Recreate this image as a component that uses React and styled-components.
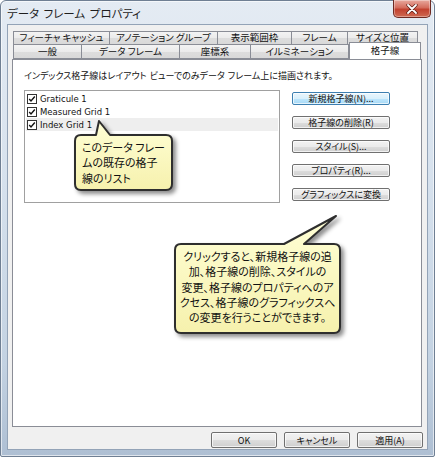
import React from 'react'
import styled, { createGlobalStyle } from 'styled-components'

const GlobalStyle = createGlobalStyle`
  html, body { margin: 0; padding: 0; background: #ffffff; }
  body {
    font-family: "Noto Sans CJK JP", "Liberation Sans", sans-serif;
    font-feature-settings: "palt";
  }
`

const Window = styled.div`
  position: relative;
  box-sizing: border-box;
  width: 435px;
  height: 457px;
  padding: 0 6px 6px 6px;
  border: 1px solid #6f7f93;
  border-radius: 6px 6px 2px 2px;
  background: linear-gradient(180deg, #e4ebf3 0%, #d6e1ed 40%, #c3d2e2 80%, #aebfd3 100%);
  box-shadow: inset 0 0 0 1px rgba(255, 255, 255, 0.6);
  display: flex;
  flex-direction: column;
`

const TitleBar = styled.div`
  height: 23px;
  display: flex;
  justify-content: space-between;
  align-items: flex-start;
`

const TitleText = styled.span`
  margin-top: 4px;
  font-size: 11.5px;
  color: #1e1e1e;
  word-spacing: 2px;
`

const CloseButton = styled.div`
  width: 38px;
  height: 18px;
  margin: -1px -3px 0 0;
  box-sizing: border-box;
  border: 1px solid #6e2a22;
  border-top: none;
  border-radius: 0 0 5px 5px;
  background: linear-gradient(180deg, #e8a99e 0%, #d46c5c 45%, #c2412f 55%, #cf6a52 100%);
  box-shadow: inset 0 0 0 1px rgba(255, 255, 255, 0.35);
  display: flex;
  align-items: center;
  justify-content: center;
`

const Client = styled.div`
  flex: 1;
  box-sizing: border-box;
  border: 1px solid #93a3b7;
  background: #f0f0f0;
  padding: 6px 5px 0 4px;
  display: flex;
  flex-direction: column;
`

const TabRow = styled.div`
  display: flex;
  margin-left: 1px;
  margin-top: ${p => (p.$second ? '-1px' : '0')};
  position: relative;
  z-index: ${p => (p.$second ? 2 : 1)};
`

const Tab = styled.div`
  box-sizing: border-box;
  width: ${p => p.$w}px;
  height: ${p => (p.$active ? 18 : p.$h)}px;
  margin-top: ${p => (p.$active ? '-2px' : '0')};
  margin-bottom: ${p => (p.$active ? '-3px' : '0')};
  border: 1px solid #8a8d96;
  border-left-width: ${p => (p.$first || p.$active ? 1 : 0)}px;
  border-bottom: ${p => (p.$active ? 'none' : '1px solid #8a8d96')};
  background: ${p =>
    p.$active ? '#ffffff' : 'linear-gradient(180deg, #f3f3f3 0%, #ebebeb 50%, #dddddd 51%, #d9d9d9 100%)'};
  font-size: 9.5px;
  color: #111;
  display: flex;
  justify-content: center;
  align-items: ${p => (p.$active ? 'flex-start' : 'center')};
  padding-top: ${p => (p.$active ? '3px' : '0')};
  line-height: 1;
  white-space: nowrap;
  position: relative;
  z-index: ${p => (p.$active ? 3 : 1)};
`

const Panel = styled.div`
  position: relative;
  z-index: 2;
  box-sizing: border-box;
  width: 410px;
  height: 368px;
  border: 1px solid #8a8d96;
  background: #ffffff;
  padding: 10px 0 0 11px;
`

const Description = styled.div`
  font-size: 9px;
  line-height: 12px;
  color: #111;
  white-space: nowrap;
  word-spacing: 1px;
`

const ListRow = styled.div`
  display: flex;
  gap: 12px;
  margin-top: 8px;
`

const ListBox = styled.div`
  box-sizing: border-box;
  width: 256px;
  height: 113px;
  border: 1px solid #a0a0a0;
  padding: 1px;
`

const Item = styled.div`
  height: 13px;
  display: flex;
  align-items: center;
  gap: 3px;
  padding-left: 1px;
  background: ${p => (p.$selected ? '#eeeeee' : 'transparent')};
  font-family: "DejaVu Sans", "Liberation Sans", sans-serif;
  font-size: 8.5px;
  color: #111;
`

const Check = styled.span`
  box-sizing: border-box;
  width: 10px;
  height: 10px;
  border: 1px solid #333;
  background: #fff;
  display: flex;
  align-items: center;
  justify-content: center;
`

const ButtonColumn = styled.div`
  display: flex;
  flex-direction: column;
  gap: 11px;
  padding-top: 2px;
`

const Button = styled.div`
  box-sizing: border-box;
  width: ${p => p.$w}px;
  height: ${p => p.$h}px;
  border: 1px solid ${p => (p.$default ? '#3c7fb1' : '#707070')};
  border-radius: 2px;
  background: ${p =>
    p.$default
      ? 'linear-gradient(180deg, #eaf6fd 0%, #d9f0fc 50%, #bee6fd 51%, #a7d9f5 100%)'
      : 'linear-gradient(180deg, #f2f2f2 0%, #ebebeb 50%, #dddddd 51%, #cfcfcf 100%)'};
  box-shadow: inset 0 0 0 1px rgba(255, 255, 255, 0.7);
  font-size: 9px;
  color: #111;
  display: flex;
  align-items: center;
  justify-content: center;
  white-space: nowrap;
  line-height: 1;
`

const Footer = styled.div`
  display: flex;
  justify-content: flex-end;
  gap: 7px;
  padding: 5px 0 0 0;
  margin-right: -1px;
`

const CalloutWrap = styled.div`
  position: absolute;
  left: ${p => p.$x}px;
  top: ${p => p.$y}px;
  width: ${p => p.$w}px;
  height: ${p => p.$h}px;
  z-index: 10;
`

const CalloutShape = styled.svg`
  position: absolute;
  left: 0;
  top: 0;
  overflow: visible;
  filter: drop-shadow(3px 3px 2px rgba(0, 0, 0, 0.45));
`

const CalloutText = styled.div`
  position: relative;
  box-sizing: border-box;
  height: 100%;
  padding: ${p => p.$pad};
  font-size: 11px;
  line-height: 15.3px;
  color: #111;
  text-align: ${p => p.$align};
  white-space: nowrap;
`

function Callout({ x, y, w, h, b1, b2, tx, ty, align, pad, children }) {
  const r = 7
  const d = `M${r},1 L${b1},1 L${tx},${ty} L${b2},1 L${w - r},1 Q${w - 1},1 ${w - 1},${r} L${w - 1},${h - r} Q${w - 1},${h - 1} ${w - r},${h - 1} L${r},${h - 1} Q1,${h - 1} 1,${h - r} L1,${r} Q1,1 ${r},1 Z`
  const id = `cg${x}`
  return (
    <CalloutWrap $x={x} $y={y} $w={w} $h={h}>
      <CalloutShape width={w} height={h}>
        <defs>
          <linearGradient id={id} x1="0" y1="0" x2="0" y2="1">
            <stop offset="0" stopColor="#ffffd6" />
            <stop offset="1" stopColor="#f6f1ad" />
          </linearGradient>
        </defs>
        <path d={d} fill={`url(#${id})`} stroke="#2e2e2e" strokeWidth="2" strokeLinejoin="round" />
      </CalloutShape>
      <CalloutText $align={align} $pad={pad}>{children}</CalloutText>
    </CalloutWrap>
  )
}

const row1 = [
  ['フィーチャ キャッシュ', 97],
  ['アノテーション グループ', 108],
  ['表示範囲枠', 74],
  ['フレーム', 56],
  ['サイズと位置', 70],
]
const row2 = [
  ['一般', 69],
  ['データ フレーム', 98],
  ['座標系', 71],
  ['イルミネーション', 98],
  ['格子線', 72, true],
]

const grids = ['Graticule 1', 'Measured Grid 1', 'Index Grid 1']
const actions = ['新規格子線(N)...', '格子線の削除(R)', 'スタイル(S)...', 'プロパティ(R)...', 'グラフィックスに変換']

const CheckMark = () => (
  <svg width="8" height="8" viewBox="0 0 8 8">
    <path d="M1.2 4 L3 6 L6.8 1.5" fill="none" stroke="#111" strokeWidth="1.4" />
  </svg>
)

export default function App() {
  return (
    <>
      <GlobalStyle />
      <Window>
        <TitleBar>
          <TitleText>データ フレーム プロパティ</TitleText>
          <CloseButton>
            <svg width="12" height="10" viewBox="0 0 12 10">
              <path d="M2 1 L10 9 M10 1 L2 9" stroke="#5a1a12" strokeWidth="3.2" strokeLinecap="round" />
              <path d="M2 1 L10 9 M10 1 L2 9" stroke="#ffffff" strokeWidth="1.8" strokeLinecap="round" />
            </svg>
          </CloseButton>
        </TitleBar>
        <Client>
          <TabRow>
            {row1.map(([t, w], i) => (
              <Tab key={t} $w={w} $h={14} $first={i === 0}>{t}</Tab>
            ))}
          </TabRow>
          <TabRow $second>
            {row2.map(([t, w, a], i) => (
              <Tab key={t} $w={w} $h={15} $first={i === 0} $active={a}>{t}</Tab>
            ))}
          </TabRow>
          <Panel>
            <Description>インデックス格子線はレイアウト ビューでのみデータ フレーム上に描画されます。</Description>
            <ListRow>
              <ListBox>
                {grids.map((g, i) => (
                  <Item key={g} $selected={i === 2}>
                    <Check><CheckMark /></Check>
                    {g}
                  </Item>
                ))}
              </ListBox>
              <ButtonColumn>
                {actions.map((a, i) => (
                  <Button key={a} $w={98} $h={13} $default={i === 0}>{a}</Button>
                ))}
              </ButtonColumn>
            </ListRow>
          </Panel>
          <Footer>
            <Button $w={66} $h={16}>OK</Button>
            <Button $w={66} $h={16}>キャンセル</Button>
            <Button $w={66} $h={16}>適用(A)</Button>
          </Footer>
        </Client>
        <Callout x={73} y={133} w={99} h={57} b1={22} b2={36} tx={25} ty={-13} align="left" pad="6px 0 0 8px">
          このデータ フレー<br />ムの既存の格子<br />線のリスト
        </Callout>
        <Callout x={173} y={242} w={167} h={91} b1={110} b2={130} tx={162} ty={-27} align="center" pad="6px 0 0 0">
          クリックすると、新規格子線の追<br />加、格子線の削除、スタイルの<br />変更、格子線のプロパティへのア<br />クセス、格子線のグラフィックスへ<br />の変更を行うことができます。
        </Callout>
      </Window>
    </>
  )
}
